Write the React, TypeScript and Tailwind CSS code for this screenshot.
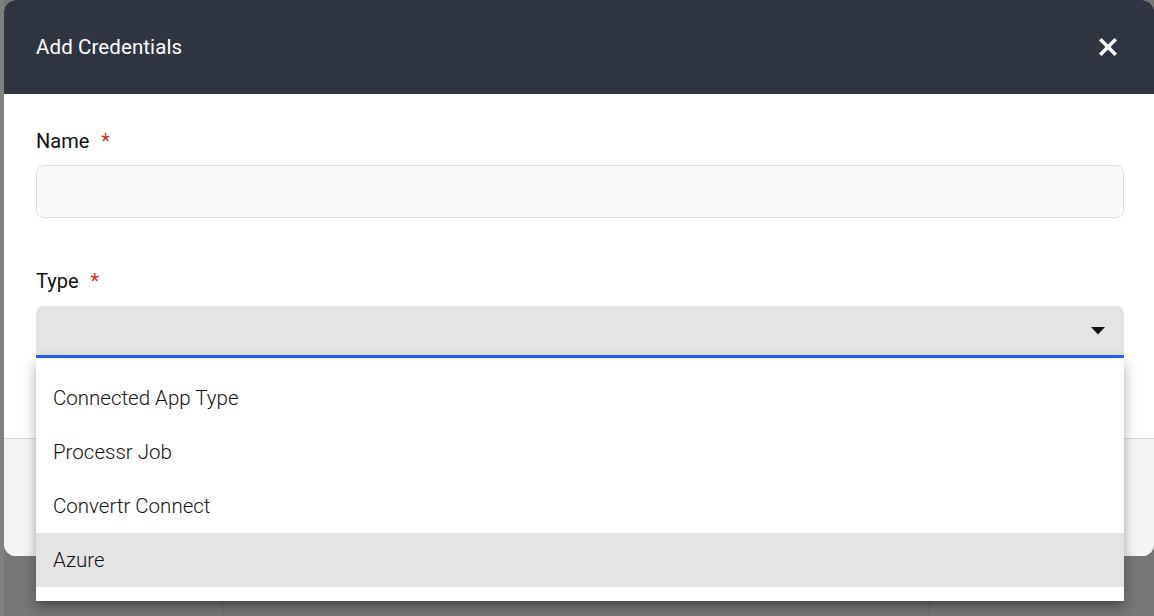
import React from "react";

const options = ["Connected App Type", "Processr Job", "Convertr Connect", "Azure"];

function CloseIcon() {
  return (
    <svg width="18" height="18" viewBox="0 0 18 18" aria-hidden="true">
      <path d="M2.5 2.5 L15.5 15.5 M15.5 2.5 L2.5 15.5" stroke="white" strokeWidth="3.6" strokeLinecap="square" />
    </svg>
  );
}

function FieldLabel({ text }: { text: string }) {
  return (
    <div className="h-[28px] leading-[28px] text-[20px] text-[#111] flex items-center">
      <span>{text}</span>
      <span className="ml-[12px] text-[#d32f2f]">*</span>
    </div>
  );
}

export default function App() {
  return (
    <div
      className="relative w-full h-[616px] bg-[#777777] overflow-hidden"
      style={{ fontFamily: "Roboto, 'Liberation Sans', sans-serif" }}
    >
      {/* stuff behind the overlay */}
      <div className="absolute left-0 top-[205px] w-[2px] h-[15px] bg-[#222]" />
      <div className="absolute left-[222px] top-[556px] w-px h-[60px] bg-[#6a6a6a]" />
      <div className="absolute left-[929px] top-[556px] w-px h-[60px] bg-[#6a6a6a]" />
      <div className="absolute left-0 top-0 w-[4px] h-full bg-[#808080]" />

      <div className="ml-[4px] w-[1150px] h-[556px] rounded-[12px] overflow-hidden flex flex-col bg-white">
        <div className="h-[94px] shrink-0 bg-[#2f3541] flex items-center justify-between pl-[32px] pr-[37px]">
          <span className="text-white text-[20.5px] font-normal tracking-[0.1px]">Add Credentials</span>
          <CloseIcon />
        </div>

        <div className="h-[344px] shrink-0 pl-[32px] pr-[30px] pt-[33px]">
          <FieldLabel text="Name" />
          <div className="mt-[10px] h-[53px] rounded-[8px] border border-[#dedede] bg-[#fafafa]" />
          <div className="mt-[49px]">
            <FieldLabel text="Type" />
          </div>
          <div className="mt-[11px] h-[52px] rounded-t-[8px] bg-[#e4e4e4] border-b-[3px] border-[#2962ff] flex items-center justify-end pr-[19px]">
            <svg width="14" height="8" viewBox="0 0 14 8" aria-hidden="true">
              <path d="M0 0 L14 0 L7 7.5 Z" fill="#111" />
            </svg>
          </div>
        </div>

        <div className="flex-1 border-t border-[#dcdcdc] bg-[#f4f4f4]" />
      </div>

      {/* open select menu */}
      <div className="absolute left-[36px] top-[359px] w-[1088px] h-[242px] bg-white pt-[12px] shadow-[0_8px_10px_1px_rgba(0,0,0,0.14),0_3px_14px_2px_rgba(0,0,0,0.12),0_5px_5px_-3px_rgba(0,0,0,0.2)]">
        {options.map((opt) => (
          <div
            key={opt}
            className={
              "h-[54px] flex items-center pl-[17px] text-[20.5px] font-light text-[#111] " +
              (opt === "Azure" ? "bg-[#e4e4e4]" : "")
            }
          >
            {opt}
          </div>
        ))}
      </div>
    </div>
  );
}
